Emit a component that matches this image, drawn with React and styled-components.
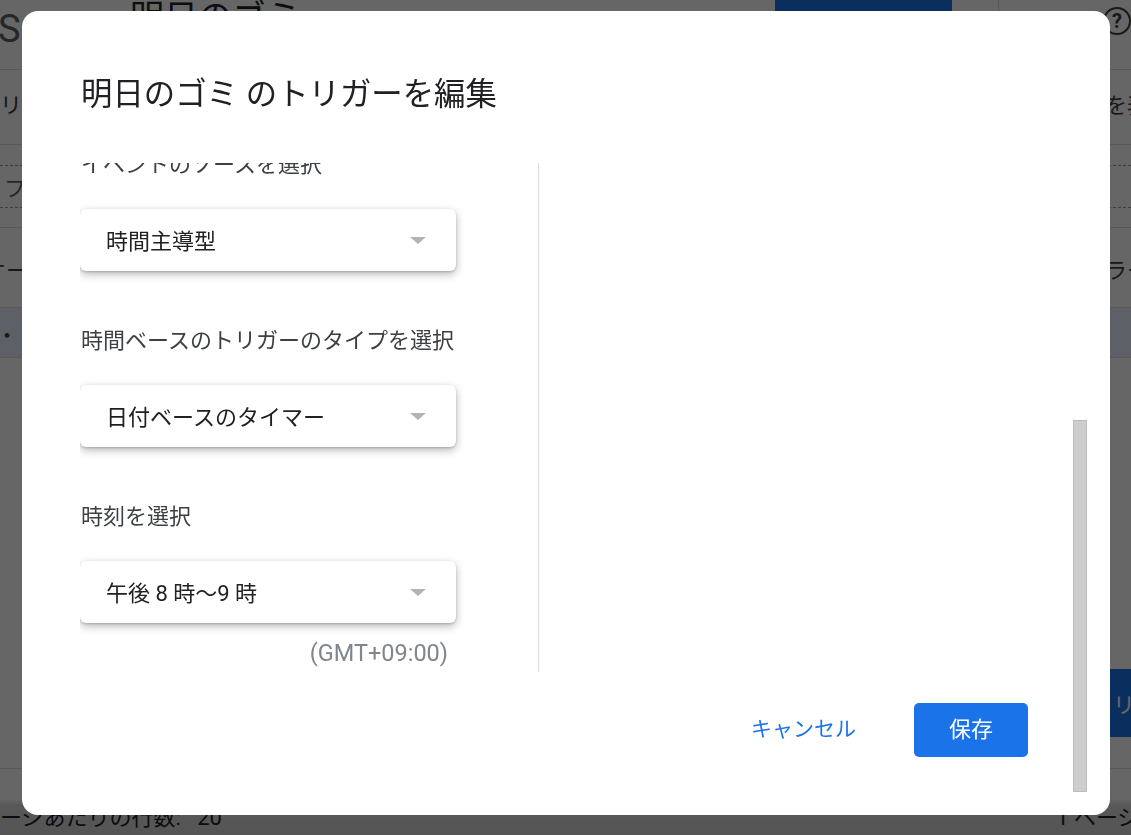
import React from 'react';
import styled, { createGlobalStyle } from 'styled-components';

const GlobalStyle = createGlobalStyle`
  html, body {
    margin: 0;
    padding: 0;
    background: #fff;
    font-family: Roboto, "Noto Sans CJK JP", sans-serif;
    overflow: hidden;
  }
  * { box-sizing: border-box; }
`;

/* ---------- page behind the dialog ---------- */

const Page = styled.div`
  width: 1131px;
  height: 835px;
  overflow: hidden;
  display: flex;
  flex-direction: column;
  color: #3c4043;
`;

const Header = styled.header`
  height: 70px;
  flex-shrink: 0;
  display: flex;
  align-items: center;
  border-bottom: 1px solid #dadce0;
`;

const Logo = styled.span`
  font-size: 38px;
  color: #5f6368;
  margin: -12px 0 0 -2px;
  width: 132px;
`;

const ProjectTitle = styled.h1`
  margin: -40px 0 0;
  font-size: 34px;
  font-weight: 400;
  color: #202124;
  flex: 1;
`;

const DeployButton = styled.div`
  width: 177px;
  height: 48px;
  margin-top: -30px;
  background: #1a73e8;
  border-radius: 4px;
`;

const HeaderDivider = styled.div`
  width: 1px;
  height: 40px;
  margin: -30px 0 0 46px;
  background: #dadce0;
`;

const HelpIcon = styled.div`
  width: 28px;
  height: 28px;
  margin: -28px 0 0 104px;
  border: 2.5px solid #3c4043;
  border-radius: 50%;
  display: flex;
  align-items: center;
  justify-content: center;
  font-size: 20px;
  font-weight: 700;
`;

const Row = styled.div`
  height: ${p => p.$h}px;
  flex-shrink: 0;
  display: flex;
  align-items: center;
  justify-content: space-between;
  border-bottom: 1px solid #dadce0;
  background: ${p => p.$bg || 'transparent'};
  font-size: 22px;
  padding-bottom: ${p => p.$pb || 0}px;
`;

const Bleed = styled.span`
  margin-left: ${p => p.$l || 0}px;
  margin-right: ${p => p.$r || 0}px;
  white-space: nowrap;
`;

const FilterBox = styled.div`
  width: 100%;
  height: 43px;
  display: flex;
  align-items: center;
  padding-left: 4px;
  border-top: 1px dashed #9aa0a6;
  border-bottom: 1px dashed #9aa0a6;
  font-size: 22px;
  color: #5f6368;
`;

const Spacer = styled.div`
  flex: 1;
  position: relative;
`;

const Fab = styled.div`
  position: absolute;
  left: 1080px;
  top: 311px;
  width: 220px;
  height: 68px;
  padding-left: 11px;
  background: #1a73e8;
  color: #fff;
  font-size: 22px;
  display: flex;
  align-items: center;
`;

const PageFooter = styled.div`
  height: 67px;
  flex-shrink: 0;
  border-top: 1px solid #dadce0;
  background: linear-gradient(180deg, #fff 0%, #fff 45%, #dcdcdc 55%, #d4d4d4 100%);
  display: flex;
  align-items: flex-end;
  justify-content: space-between;
  padding-bottom: 4px;
  font-size: 22px;
  color: #202124;
`;

/* ---------- dialog ---------- */

const Overlay = styled.div`
  position: fixed;
  inset: 0;
  background: rgba(0, 0, 0, 0.6);
  padding: 11px 0 0 22px;
`;

const Dialog = styled.div`
  width: 1088px;
  height: 804px;
  background: #fff;
  border-radius: 16px;
  display: flex;
  overflow: hidden;
`;

const DialogMain = styled.div`
  flex: 1;
  display: flex;
  flex-direction: column;
  padding: 64px 45px 0 58px;
`;

const DialogTitle = styled.h2`
  margin: 0;
  height: 40px;
  line-height: 40px;
  font-size: 31.4px;
  font-weight: 400;
  color: #202124;
  padding-left: 1px;
`;

const DialogBody = styled.div`
  margin-top: 48px;
  height: 509px;
  display: flex;
`;

const LeftPane = styled.div`
  width: 459px;
  border-right: 1px solid #dadce0;
  overflow: hidden;
`;

const ScrollContent = styled.div`
  margin-top: -13px;
  display: flex;
  flex-direction: column;
  gap: 55px;
`;

const Field = styled.div`
  display: flex;
  flex-direction: column;
  gap: 29px;
`;

const Label = styled.div`
  height: 30px;
  line-height: 30px;
  font-size: 22px;
  color: #3c4043;
  padding-left: 1px;
`;

const Select = styled.div`
  width: 376px;
  height: 62px;
  border-radius: 6px;
  background: #fff;
  box-shadow: 0 3px 8px rgba(0, 0, 0, 0.3), 0 1px 2px rgba(0, 0, 0, 0.15);
  display: flex;
  align-items: center;
  justify-content: space-between;
  padding: 0 30px 3px 26px;
  font-size: 22px;
  color: #202124;
`;

const Caret = styled.span`
  width: 0;
  height: 0;
  margin-top: 3px;
  border-left: 8px solid transparent;
  border-right: 8px solid transparent;
  border-top: 7px solid #b3b3b3;
`;

const TimeZone = styled.div`
  width: 376px;
  margin-top: -40px;
  padding-right: 8px;
  text-align: right;
  line-height: 30px;
  font-size: 23.5px;
  color: #80868b;
`;

const DialogFooter = styled.div`
  margin-top: 31px;
  display: flex;
  justify-content: flex-end;
  gap: 34px;
`;

const TextButton = styled.button`
  height: 54px;
  padding: 0 24px 6px;
  border: none;
  background: transparent;
  color: #1a73e8;
  font: inherit;
  font-size: 21px;
  cursor: pointer;
`;

const PrimaryButton = styled.button`
  width: 114px;
  height: 54px;
  padding: 0 0 6px;
  border: none;
  border-radius: 5px;
  background: #1a73e8;
  color: #fff;
  font: inherit;
  font-size: 22px;
  cursor: pointer;
`;

const ScrollTrack = styled.div`
  width: 14px;
  margin-right: 23px;
  padding: 409px 0 23px;
  display: flex;
`;

const ScrollThumb = styled.div`
  flex: 1;
  background: #cdcdcd;
  border: 1px solid #bdbdbd;
`;

const fields = [
  { label: 'イベントのソースを選択', value: '時間主導型' },
  { label: '時間ベースのトリガーのタイプを選択', value: '日付ベースのタイマー' },
  { label: '時刻を選択', value: '午後 8 時〜9 時' },
];

export default function App() {
  return (
    <>
      <GlobalStyle />
      <Page>
        <Header>
          <Logo>Script</Logo>
          <ProjectTitle>明日のゴミ</ProjectTitle>
          <DeployButton />
          <HeaderDivider />
          <HelpIcon>?</HelpIcon>
        </Header>
        <Row $h={75} $pb={8}>
          <Bleed $l={-22}>トリガー</Bleed>
          <Bleed $r={-40}>列を表示</Bleed>
        </Row>
        <Row $h={83}>
          <FilterBox>フィルタを追加</FilterBox>
        </Row>
        <Row $h={80}>
          <Bleed $l={-16}>オーナー</Bleed>
          <Bleed $r={-40}>エラー率</Bleed>
        </Row>
        <Row $h={50} $bg="#e8f0fe">
          <Bleed $l={-4}>・</Bleed>
          <Bleed $r={-6}>›</Bleed>
        </Row>
        <Spacer>
          <Fab>トリガーを追加</Fab>
        </Spacer>
        <PageFooter>
          <Bleed $l={-22}>ページあたりの行数:&nbsp;&nbsp;&nbsp;20</Bleed>
          <Bleed $r={-30}>1 ページ/1</Bleed>
        </PageFooter>
      </Page>

      <Overlay>
        <Dialog role="dialog">
          <DialogMain>
            <DialogTitle>明日のゴミ のトリガーを編集</DialogTitle>
            <DialogBody>
              <LeftPane>
                <ScrollContent>
                  {fields.map(f => (
                    <Field key={f.label}>
                      <Label>{f.label}</Label>
                      <Select>
                        <span>{f.value}</span>
                        <Caret />
                      </Select>
                    </Field>
                  ))}
                  <TimeZone>(GMT+09:00)</TimeZone>
                </ScrollContent>
              </LeftPane>
            </DialogBody>
            <DialogFooter>
              <TextButton>キャンセル</TextButton>
              <PrimaryButton>保存</PrimaryButton>
            </DialogFooter>
          </DialogMain>
          <ScrollTrack>
            <ScrollThumb />
          </ScrollTrack>
        </Dialog>
      </Overlay>
    </>
  );
}
